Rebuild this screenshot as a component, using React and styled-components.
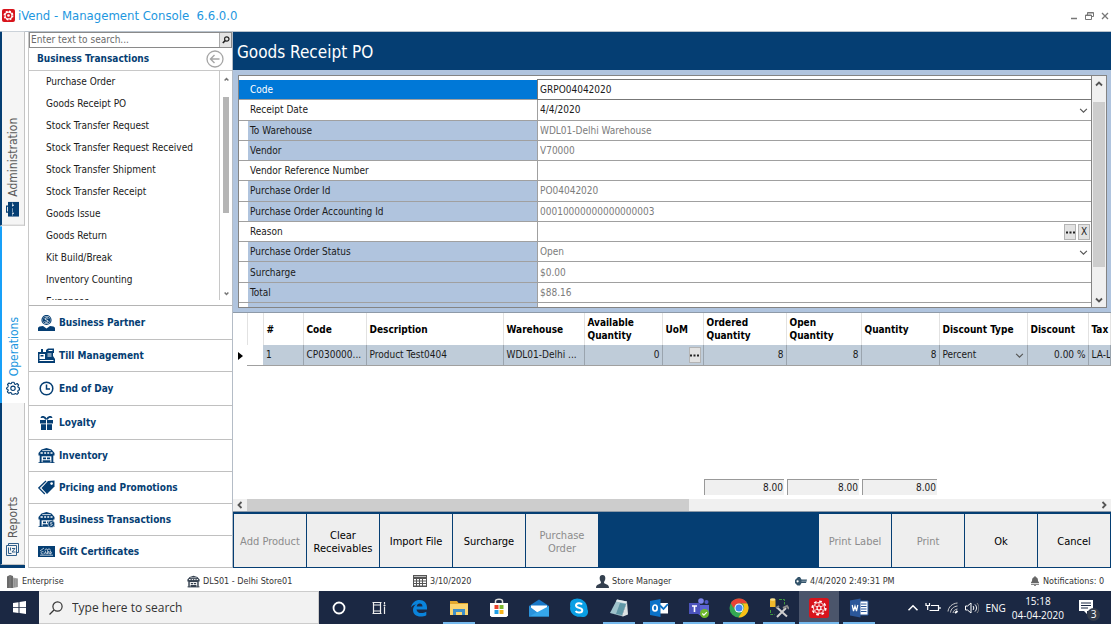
import React from 'react';
import styled, { createGlobalStyle } from 'styled-components';

const UI = "'DejaVu Sans Condensed', 'DejaVu Sans', Tahoma, sans-serif";
const SHELL = "'Open Sans', 'Noto Sans', 'Segoe UI', sans-serif";

const navy = '#053e73';
const steel = '#b0c4de';
const line = '#a0a0a0';

const menuItems = [
  'Purchase Order',
  'Goods Receipt PO',
  'Stock Transfer Request',
  'Stock Transfer Request Received',
  'Stock Transfer Shipment',
  'Stock Transfer Receipt',
  'Goods Issue',
  'Goods Return',
  'Kit Build/Break',
  'Inventory Counting',
  'Expenses',
];

const fields = [
  { id: 'code', label: 'Code', value: 'GRPO04042020', active: true },
  { id: 'date', label: 'Receipt Date', value: '4/4/2020', drop: true },
  { id: 'warehouse', label: 'To Warehouse', value: 'WDL01-Delhi Warehouse', locked: true },
  { id: 'vendor', label: 'Vendor', value: 'V70000', locked: true },
  { id: 'vendorRef', label: 'Vendor Reference Number', value: '' },
  { id: 'poId', label: 'Purchase Order Id', value: 'PO04042020', locked: true },
  { id: 'poAcc', label: 'Purchase Order Accounting Id', value: '00010000000000000003', locked: true },
  { id: 'reason', label: 'Reason', value: '', lookup: true },
  { id: 'status', label: 'Purchase Order Status', value: 'Open', locked: true, drop: true },
  { id: 'surcharge', label: 'Surcharge', value: '$0.00', locked: true },
  { id: 'total', label: 'Total', value: '$88.16', locked: true },
];

const columns = [
  { title: '', width: 14 },
  { title: '', width: 16 },
  { title: '#', width: 40 },
  { title: 'Code', width: 63 },
  { title: 'Description', width: 137 },
  { title: 'Warehouse', width: 81 },
  { title: 'Available Quantity', width: 78 },
  { title: 'UoM', width: 41 },
  { title: 'Ordered Quantity', width: 83 },
  { title: 'Open Quantity', width: 75 },
  { title: 'Quantity', width: 78 },
  { title: 'Discount Type', width: 88 },
  { title: 'Discount', width: 61 },
  { title: 'Tax', width: 0 },
];

const leftActions = [
  { text: 'Add Product', disabled: true },
  { text: 'Clear Receivables' },
  { text: 'Import File' },
  { text: 'Surcharge' },
  { text: 'Purchase Order', disabled: true },
];

const rightActions = [
  { text: 'Print Label', disabled: true },
  { text: 'Print', disabled: true },
  { text: 'Ok' },
  { text: 'Cancel' },
];

/* ---------- icons ---------- */

const Chevron = ({ dir = 'down', size = 8, color = '#555', weight = 1.4 }) => {
  const d = {
    down: 'M1 2.5 4 5.5 7 2.5',
    up: 'M1 5.5 4 2.5 7 5.5',
    left: 'M5.5 1 2.5 4 5.5 7',
    right: 'M2.5 1 5.5 4 2.5 7',
  }[dir];
  return (
    <svg width={size} height={size} viewBox="0 0 8 8">
      <path d={d} fill="none" stroke={color} strokeWidth={weight} />
    </svg>
  );
};

const LogoIcon = ({ size = 13 }) => (
  <svg width={size} height={size} viewBox="0 0 20 20">
    <rect width="20" height="20" rx="3" fill="#d8141c" />
    <circle cx="10" cy="10" r="6.6" fill="none" stroke="#fff" strokeWidth="2" strokeDasharray="3 2.18" />
    <circle cx="10" cy="10" r="5.2" fill="none" stroke="#fff" strokeWidth="1.6" />
    <circle cx="10" cy="10" r="2" fill="#fff" />
  </svg>
);

const PartnerIcon = () => (
  <svg width="17" height="16" viewBox="0 0 17 16">
    <circle cx="8.5" cy="5" r="4.5" fill="none" stroke={navy} strokeWidth="1.2" />
    <circle cx="8.5" cy="5" r="3.6" fill={navy} />
    <path d="M10.3 3.4C9.500 2.600 7 2.600 6.900 3.900c0 1.400 3.300.8 3.300 2.300 0 1.300-2.600 1.400-3.600.4" fill="none" stroke="#fff" strokeWidth="1" />
    <path d="M0 16v-3c0-1.300 2.500-1.800 5-2l3.500 2.500L12 11c2.500.2 5 .7 5 2v3z" fill={navy} />
  </svg>
);

const TillIcon = () => (
  <svg width="17" height="15" viewBox="0 0 17 15">
    <path d="M0 4h3V1h2v3h3V2l2-1.500h6V5h-1v3l2 3v4H0z" fill={navy} />
    <path d="M1.500 6H7v5H1.500z" fill="#fff" />
    <path d="M2.500 7h3v1.500h-3z" fill={navy} />
    <path d="M10.500 2.500h4M9.500 6h4M9.500 8h4M1.500 12.500h14" stroke="#fff" fill="none" />
  </svg>
);

const ClockIcon = () => (
  <svg width="15" height="15" viewBox="0 0 15 15">
    <circle cx="7.500" cy="7.500" r="6.300" fill="none" stroke={navy} strokeWidth="1.500" />
    <path d="M7.500 3.500v4.500h3.500" fill="none" stroke={navy} strokeWidth="1.500" />
  </svg>
);

const GiftIcon = () => (
  <svg width="13" height="14" viewBox="0 0 13 14">
    <path d="M0 4h6v3.500H0zM7 4h6v3.500H7zM1 8.300h5V14H1zM7 8.300h5V14H7z" fill={navy} />
    <path d="M6 3.500C5 .5 1.500 0 1.500 2M7 3.500C8 .5 11.500 0 11.500 2" fill="none" stroke={navy} strokeWidth="1.800" />
  </svg>
);

const StoreIcon = ({ size = 17, color = navy, badge }) => (
  <svg width={size} height={size} viewBox="0 0 17 17">
    <path d="M3.500 2.500 8.500 1l5 1.500 3 3.500v2.500h-1.200V16H1.700V8.500H.5V6z" fill={color} />
    <path d="M4.300 3.600h8.400" stroke="#fff" strokeWidth=".8" />
    <path d="M2.500 6h2.300M6.200 6h1.900M9.300 6h1.900M12.500 6h2" stroke="#fff" strokeWidth="1.300" />
    <path d="M3.600 9.300h9.800V16H3.600z" fill="#fff" />
    <path d="M5 10.500h3v1.700H5zM9 10.500h3v1.700H9zM4.600 13.200h7.800v1.900H4.600zM.5 15.200h16V16H.5z" fill={color} />
    {badge && (
      <>
        <circle cx="13.300" cy="13" r="3.500" fill={color} stroke="#fff" strokeWidth=".6" />
        <path d="M14.300 11.700c-1-.6-2-.2-2 .5s2 .6 2 1.400-1.200 1-2.100.4" fill="none" stroke="#fff" strokeWidth=".8" />
      </>
    )}
  </svg>
);

const TagIcon = () => (
  <svg width="17" height="15" viewBox="0 0 17 15">
    <path d="M10 1 16.500.5v6L9 14 3.500 8z" fill={navy} />
    <circle cx="13.600" cy="3.600" r="1.300" fill="#fff" />
    <path d="M8 1 .8 8l6 6" fill="none" stroke={navy} strokeWidth="1.300" />
  </svg>
);

const CardIcon = () => (
  <svg width="17" height="11" viewBox="0 0 17 11">
    <rect width="17" height="11" fill={navy} />
    <path d="M2 5 6 2M2 9.200h13M7 4.500c0-2 2.500-2 2.500 0 0-2 3-2 3 0" fill="none" stroke="#fff" strokeWidth=".7" />
    <path d="M5.500 5.800c-1.500-.5-2.500 0-2.500 1s1 1.400 2.500 1M6.500 8l1-2.500 1 2.500M9.500 8V5.500h1.200v1.200l.5 1.300M12 5.500V8c2 0 2-2.500 0-2.500" fill="none" stroke="#fff" strokeWidth=".7" />
  </svg>
);

const CaseIcon = () => (
  <svg width="13" height="15" viewBox="0 0 13 15">
    <path d="M2 0h11v15H2z" fill={navy} />
    <path d="M2.500 4.500h-2v6h2" fill="none" stroke={navy} strokeWidth="1.200" />
    <path d="M6.500 1v13" stroke="#7fa0bd" strokeDasharray="4 1.500" />
    <path d="M6 3.500h2M6 11.500h2" stroke="#fff" />
  </svg>
);

const GearIcon = () => (
  <svg width="14" height="14" viewBox="0 0 14 14" fill="none" stroke={navy} strokeWidth="1.100" strokeLinejoin="round">
    <path d="M5.900 1h2.200l.4 1.600 1.100.5 1.500-.9 1.500 1.500-.8 1.500.5 1.100 1.200.3v2l-1.300.4-.5 1.200.8 1.400-1.500 1.500-1.400-.8-1.100.5L8.100 13H5.900l-.4-1.300-1.200-.5-1.400.8-1.500-1.500.8-1.400L1.800 8 .6 7.600v-1l1.200-.8.5-1.200-.8-1.400 1.500-1.500 1.400.8 1.100-.4z" />
    <circle cx="7" cy="7" r="2.200" />
  </svg>
);

const ReportIcon = () => (
  <svg width="13" height="13" viewBox="0 0 13 13" fill="none" stroke="#2f5e8a">
    <path d="M2.500 2.500v-2h10v9h-2M.5 2.500h10v10H.5z" />
    <path d="M2.500 4.500v6M4.500 4.500v3M6 5.500h3L6 9h3.500M2.500 10.500h3" />
  </svg>
);

const PersonIcon = () => (
  <svg width="13" height="13" viewBox="0 0 13 13" fill="#34404f">
    <path d="M6.500 0C8.700 0 9.500 1.600 9.300 3.800 9.100 5.500 8.300 6.500 8 7.300c0 1 .8 1.500 2.200 2C12 9.900 13 10.500 13 13H0c0-2.500 1-3.100 2.800-3.700C4.200 8.800 5 8.300 5 7.300c-.3-.8-1.100-1.800-1.300-3.500C3.500 1.600 4.300 0 6.500 0z" />
  </svg>
);

const TowerIcon = () => (
  <svg width="12" height="13" viewBox="0 0 12 13">
    <path d="M0 1.500 3 0l3 1v12H0z" fill="#6a6a6a" />
    <path d="M6 2.500 11 3.500V12l-5 1z" fill="#a4a4a4" />
    <path d="M3 1v12M7.500 4v8M9.300 4v8" stroke="#8c8c8c" strokeWidth=".7" />
  </svg>
);

const CalendarIcon = () => (
  <svg width="14" height="12" viewBox="0 0 14 12">
    <path d="M0 0h14v12H0z" fill="#555" />
    <path d="M1 4h2v1.500H1zM4 4h2v1.500H4zM7 4h2v1.500H7zM10 4h3v1.500h-3zM1 6.500h2V8H1zM4 6.500h2V8H4zM7 6.500h2V8H7zM10 6.500h3V8h-3zM1 9h2v1.500H1zM4 9h2v1.500H4zM7 9h2v1.500H7zM10 9h3v1.500h-3z" fill="#fff" />
    <path d="M1 1.500h12" stroke="#bbb" />
  </svg>
);

const KeyIcon = () => (
  <svg width="12" height="9" viewBox="0 0 12 9">
    <path d="M3 0h2l1.500 2.500H12L11 6H6.500L5 8.500H2.500L0 6V3z" fill="#34546b" />
    <circle cx="2.600" cy="4.300" r="1.100" fill="#fff" />
    <path d="M6.500 4.200h5" stroke="#9fb3c1" strokeWidth=".8" />
  </svg>
);

const BellIcon = () => (
  <svg width="10" height="10" viewBox="0 0 10 10" fill="#666">
    <path d="M4.500 0h1v1c2 .3 2.500 1.800 2.500 4l1 1.500v.8H1v-.8L2 5c0-2.200.5-3.700 2.500-4zM1 8h8v.8H1zM4 9.200h2v.8H4z" />
  </svg>
);

/* taskbar drawings, all on a 20 unit box */
const apps = [
  {
    name: 'Edge', running: false,
    art: <path d="M2 9.500C3 4.500 6.500 2 10.500 2c4.500 0 7.500 3 7.500 7.500v2H7.500c.2 2.500 2.400 3.600 4.900 3.600 1.800 0 3.500-.5 4.900-1.300v3.400C15.600 18.200 13.700 18.600 11.700 18.600 7 18.600 4 15.800 4 12c0-2.400 1.200-4.500 3.400-5.800C5.200 6.600 3.300 7.500 2 9.500zm5.700-1h5.800c0-1.800-1-3-2.700-3s-2.800 1.200-3.100 3z" fill="#0a84dc" />,
  },
  {
    name: 'File Explorer', running: true,
    art: (<><path d="M1 3h7l1.500 2H19v12H1z" fill="#e3a92f" /><path d="M1 6h18v11H1z" fill="#fcd670" /><path d="M4 17v-6h12v6h-3v-3H7v3z" fill="#3f8fc8" /></>),
  },
  {
    name: 'Store', running: false,
    art: (<><path d="M6.500 5.500V3c0-2.500 7-2.500 7 0v2.500" fill="none" stroke="#ddd" strokeWidth="1.500" /><path d="M1 5h18v12.500L17.500 19h-15L1 17.500z" fill="#fff" /><path d="M5.500 7h4v4h-4z" fill="#e8402a" /><path d="M10.500 7h4v4h-4z" fill="#7cb82f" /><path d="M5.500 12h4v4h-4z" fill="#1e9fe8" /><path d="M10.500 12h4v4h-4z" fill="#f8b51c" /></>),
  },
  {
    name: 'Mail', running: false,
    art: (<><path d="M0 8 10 1.500 20 8v10.500H0z" fill="#1878c8" /><path d="M2 7.500h16v3l-8 5-8-5z" fill="#fff" /><path d="M0 8l9 7-9 3.500z" fill="#2a93dc" /><path d="M0 18.500 20 8v10.500z" fill="#35a6ea" /></>),
  },
  {
    name: 'Skype', running: false,
    art: (<><path d="M6 1C8-.5 18.500 1 18.500 11.500 20.500 15 17 20.500 12 18.800 4 19.500 0 13 1.300 8.500.3 4 3 1 6 1z" fill="#0a9fe4" /><path d="M13 6.500C12 4.700 7 4.700 7 7.500c0 3 6.300 1.700 6.300 4.700 0 3-5.600 3-6.600.8" fill="none" stroke="#fff" strokeWidth="2" /></>),
  },
  {
    name: 'Notepad', running: true,
    art: (<><path d="M8 1.500 18 3.500 13 18 1 15z" fill="#9fc3cc" /><path d="M8 1.500 18 3.500l-.7 2L7 3.500z" fill="#e3eaec" /><path d="M11 5l6 1-4 11-6-1z" fill="#5f97a6" /><path d="M1 15l12 3 5-14.500 1 13L14 18.500z" fill="#dde3e4" /></>),
  },
  {
    name: 'Outlook', running: true,
    art: (<><path d="M10.500 5H19v10.500h-8.500z" fill="#fff" /><path d="M11 7.500l3.500 3.500L19 6" fill="none" stroke="#0a72c8" strokeWidth="1.800" /><path d="M1 3l10.500-2v18L1 17z" fill="#0a72c8" /><ellipse cx="6" cy="10" rx="2.200" ry="3" fill="none" stroke="#fff" strokeWidth="1.700" /></>),
  },
  {
    name: 'Teams', running: true,
    art: (<><circle cx="12" cy="3" r="2.800" fill="#7b83eb" /><circle cx="17.500" cy="4" r="2" fill="#5059c9" /><path d="M8 7h12v6c0 3-2 5-5 5-4 0-7-2-7-5z" fill="#5b63d3" /><path d="M0 5h11v11H0z" fill="#4b53bc" /><path d="M3 8h5M5.500 8v6" stroke="#fff" strokeWidth="1.600" /><circle cx="15.500" cy="15.500" r="4.500" fill="#6fb92c" /><path d="M13.300 15.500l1.600 1.600 2.900-3" fill="none" stroke="#fff" strokeWidth="1.200" /></>),
  },
  {
    name: 'Chrome', running: true,
    art: (<><circle cx="10" cy="10" r="9.500" fill="#34a853" /><path d="M1.800 5.200A9.500 9.500 0 0 1 18.300 5.500H10a4.500 4.500 0 0 0-4 2.500L4.500 10z" fill="#e84335" /><path d="M18.300 5.500A9.500 9.500 0 0 1 9.500 19.500L14 12.300A4.500 4.500 0 0 0 13 5.500z" fill="#fbc116" /><circle cx="10" cy="10" r="4.500" fill="#fff" /><circle cx="10" cy="10" r="3.500" fill="#4285f4" /></>),
  },
  {
    name: 'Database Tools', running: true,
    art: (<><path d="M1 1.500h5.500V9H1z" fill="#f0b92c" /><ellipse cx="3.700" cy="1.500" rx="2.700" ry="1.200" fill="#fbe08a" /><path d="M10 1.500h5.500v5M1.500 12v4.500h4" fill="none" stroke="#3f9a3f" strokeWidth="1" strokeDasharray="3 1" /><path d="M8 9.500l10 9M17 10 8 19" stroke="#cfcfcf" strokeWidth="2" /><path d="M14 10l4-2 2 3M7 10l3-2" stroke="#8a8a8a" strokeWidth="2" fill="none" /></>),
  },
  {
    name: 'iVend', running: true, current: true,
    art: (<><rect width="20" height="20" rx="2.500" fill="#d8141c" /><circle cx="10" cy="10" r="6.800" fill="none" stroke="#fff" strokeWidth="1.600" strokeDasharray="2.700 2.640" /><circle cx="10" cy="10" r="5.500" fill="none" stroke="#fff" strokeWidth=".9" /><circle cx="10" cy="10" r="2" fill="none" stroke="#fff" strokeWidth="1.100" /><path d="M10 5v3M10 12v3M5.700 7.500l2.600 1.500M11.700 11l2.600 1.500M14.300 7.500 11.700 9M8.300 11l-2.600 1.500" stroke="#fff" strokeWidth=".8" /></>),
  },
  {
    name: 'Word', running: true,
    art: (<><path d="M10 3h9v14h-9z" fill="#fff" stroke="#2b579a" /><path d="M12 6h5.500M12 8.500h5.500M12 11h5.500M12 13.500h5.500" stroke="#2b579a" /><path d="M1 2.500l10.500-2v19L1 17.500z" fill="#2b579a" /><path d="M3.200 7l1.300 6L6 8l1.500 5 1.300-6" fill="none" stroke="#fff" strokeWidth="1.200" /></>),
  },
];

/* ---------- screen ---------- */

const sections = [
  { text: 'Business Partner', icon: <PartnerIcon />, size: 34 },
  { text: 'Till Management', icon: <TillIcon />, size: 32 },
  { text: 'End of Day', icon: <ClockIcon />, size: 34 },
  { text: 'Loyalty', icon: <GiftIcon />, size: 34 },
  { text: 'Inventory', icon: <StoreIcon />, size: 32 },
  { text: 'Pricing and Promotions', icon: <TagIcon />, size: 32 },
  { text: 'Business Transactions', icon: <StoreIcon badge />, size: 32 },
  { text: 'Gift Certificates', icon: <CardIcon />, size: 32 },
];

const TitleBar = () => (
  <TitleRow>
    <LogoIcon />
    <AppTitle>iVend - Management Console&nbsp; 6.6.0.0</AppTitle>
    <WindowButtons>
      <button aria-label="Minimize">
        <svg width="8" height="8" viewBox="0 0 8 8"><path d="M1 6.500h6" stroke="#777" strokeWidth="1.500" /></svg>
      </button>
      <button aria-label="Restore">
        <svg width="9" height="8" viewBox="0 0 9 8" fill="none" stroke="#777"><path d="M2.500 3V.5h6v4H6.500M.5 3h6v4.500h-6zM.5 3.500h6M2.500 1h6" /></svg>
      </button>
      <button aria-label="Close">
        <svg width="8" height="8" viewBox="0 0 8 8"><path d="M1 1l6 6M7 1 1 7" stroke="#777" strokeWidth="1.300" /></svg>
      </button>
    </WindowButtons>
  </TitleRow>
);

const Sidebar = () => (
  <SidebarBox>
    <SearchRow>
      <input type="text" aria-label="Search" placeholder="Enter text to search..." />
      <button aria-label="Find">
        <svg width="8" height="8" viewBox="0 0 8 8" fill="none" stroke="#222"><circle cx="4.800" cy="3" r="2.200" strokeWidth="1.200" /><path d="M3.200 4.600.8 7" strokeWidth="1.500" /></svg>
      </button>
    </SearchRow>
    <SidebarHead>
      <h2>Business Transactions</h2>
      <button aria-label="Back">
        <svg width="18" height="18" viewBox="0 0 18 18" fill="none" stroke="#a6a6a6"><circle cx="9" cy="9" r="8" strokeWidth="1.300" /><path d="M13.500 9h-9M8.500 5l-4 4 4 4" strokeWidth="1.400" /></svg>
      </button>
    </SidebarHead>
    <MenuArea>
      <Menu>
        {menuItems.map((item) => (
          <li key={item}><a href="#menu">{item}</a></li>
        ))}
      </Menu>
      <MenuScroll>
        <Chevron dir="up" size={5} color="#777" weight={2.500} />
        <MenuThumb />
        <Chevron size={5} color="#777" weight={2.500} />
      </MenuScroll>
    </MenuArea>
    <Sections>
      {sections.map((s) => (
        <SectionButton key={s.text} $size={s.size}>
          <SectionIcon>{s.icon}</SectionIcon>
          {s.text}
        </SectionButton>
      ))}
    </Sections>
  </SidebarBox>
);

const PropertyForm = () => (
  <FormFrame>
    <FormBox>
      <FormRows>
        {fields.map((f) => (
          <FieldRow key={f.id}>
            <FieldLabel htmlFor={f.id} $active={f.active} $locked={f.locked}>{f.label}</FieldLabel>
            <FieldCell $active={f.active}>
              <FieldInput id={f.id} defaultValue={f.value} readOnly={f.locked} $locked={f.locked} />
              {f.drop && <DropButton type="button" aria-label={`Open ${f.label}`}><Chevron size={9} weight={1} /></DropButton>}
              {f.lookup && (
                <>
                  <SmallButton type="button" aria-label="Browse reasons"><Dots /></SmallButton>
                  <SmallButton type="button">X</SmallButton>
                </>
              )}
            </FieldCell>
          </FieldRow>
        ))}
        <FieldRow>
          <FieldLabel as="span" $locked />
          <FieldCell />
        </FieldRow>
      </FormRows>
      <FormScroll>
        <Chevron dir="up" weight={1.800} />
        <FormThumb />
        <Chevron weight={1.800} />
      </FormScroll>
    </FormBox>
  </FormFrame>
);

const Dots = () => (
  <svg width="9" height="3" viewBox="0 0 9 3"><path d="M0 .5h2v2H0zM3.500.5h2v2h-2zM7 .5h2v2H7z" fill="#222" /></svg>
);

const LinesGrid = () => (
  <GridArea>
    <LinesTable>
      <colgroup>
        {columns.map((c, i) => <Column key={i} $w={c.width} />)}
      </colgroup>
      <thead>
        <tr>{columns.map((c, i) => <th key={i}>{c.title}</th>)}</tr>
      </thead>
      <tbody>
        <LineRow>
          <MarkCell><svg width="5" height="8" viewBox="0 0 5 8"><path d="M0 0l5 4-5 4z" fill="#000" /></svg></MarkCell>
          <BlankCell />
          <td>1</td>
          <td>CP030000...</td>
          <td>Product Test0404</td>
          <td>WDL01-Delhi ...</td>
          <NumCell>0</NumCell>
          <PickCell><SmallButton aria-label="Choose unit"><Dots /></SmallButton></PickCell>
          <NumCell>8</NumCell>
          <NumCell>8</NumCell>
          <NumCell>8</NumCell>
          <td><TypePick><span>Percent</span><Chevron size={9} weight={1} /></TypePick></td>
          <NumCell>0.00 %</NumCell>
          <td>LA-L</td>
        </LineRow>
        <tr><td colSpan={14} /></tr>
      </tbody>
      <tfoot>
        <tr>
          <td colSpan={8} />
          <td><Sum>8.00</Sum></td>
          <td><Sum>8.00</Sum></td>
          <td><Sum>8.00</Sum></td>
          <td colSpan={3} />
        </tr>
      </tfoot>
    </LinesTable>
    <GridScroll>
      <Chevron dir="left" weight={1.800} />
      <GridTrack><GridThumb /></GridTrack>
      <Chevron dir="right" weight={1.800} />
    </GridScroll>
  </GridArea>
);

const Taskbar = () => (
  <TaskRow>
    <StartButton aria-label="Start">
      <svg width="13" height="13" viewBox="0 0 13 13" fill="#fff"><path d="M0 2l5.500-.8v5H0zM6.500 1 13 0v6.200H6.500zM0 7h5.500v5L0 11.200zM6.500 7H13v6l-6.500-.9z" /></svg>
    </StartButton>
    <TaskSearch>
      <svg width="14" height="14" viewBox="0 0 14 14" fill="none" stroke="#333" strokeWidth="1.200"><circle cx="8.500" cy="5.500" r="4.600" /><path d="M5 9 .5 13.500" /></svg>
      <input type="text" aria-label="Type here to search" placeholder="Type here to search" />
    </TaskSearch>
    <TaskButton aria-label="Cortana">
      <svg width="14" height="14" viewBox="0 0 14 14"><circle cx="7" cy="7" r="5.500" fill="none" stroke="#fff" strokeWidth="1.800" /></svg>
    </TaskButton>
    <TaskButton aria-label="Task View">
      <svg width="14" height="14" viewBox="0 0 14 14" fill="none" stroke="#eee" strokeWidth="1.200"><path d="M.5 1.500h9M1.500 4h7v6h-7zM.5 12.500h9M1.500 1v3M8.500 1v3M1.500 10v3M8.500 10v3M12.500 1v2.500M12.500 5.500V13M11.500 4.500h2" /></svg>
    </TaskButton>
    {apps.map((a) => (
      <TaskButton key={a.name} aria-label={a.name} $running={a.running} $current={a.current}>
        <svg width="20" height="20" viewBox="0 0 20 20">{a.art}</svg>
      </TaskButton>
    ))}
    <Tray>
      <Chevron dir="up" size={12} color="#fff" weight={1} />
      <svg width="16" height="11" viewBox="0 0 16 11" fill="none" stroke="#fff"><path d="M6 3.500h7.500v5h-9M15 5v2M1 1v2.500h3.500V1M2.700 3.500V8" strokeWidth="1.200" /></svg>
      <svg width="12" height="12" viewBox="0 0 12 12" fill="none" stroke="#ccc"><path d="M1 9.500C1.500 5 5 1.500 10.500 1M3.500 10.500c.3-3.500 3-6 7-6.500M6 11c.2-2 2-3.700 4.500-4" /><path d="M8 11l2.500-2" stroke="#fff" strokeWidth="2" /></svg>
      <svg width="14" height="12" viewBox="0 0 14 12" fill="none" stroke="#fff"><path d="M.5 4h2L6 1v10L2.500 8h-2z" /><path d="M8 4c1 1 1 3 0 4M10 2.500c2 2 2 5 0 7" /><path d="M12 1c2.500 3 2.500 7 0 10" stroke="#888" /></svg>
      <span>ENG</span>
      <Clock><span>15:18</span><span>04-04-2020</span></Clock>
      <NoteButton aria-label="Notifications">
        <svg width="20" height="20" viewBox="0 0 20 20"><path d="M1 2h14v11H9v3l-3-3H1z" fill="#fff" /><path d="M3 5h10M3 7.500h10M3 10h7" stroke="#1b2843" /></svg>
        <NoteCount>3</NoteCount>
      </NoteButton>
    </Tray>
  </TaskRow>
);

const App = () => (
  <Window>
    <Global />
    <TitleBar />
    <Body>
      <Rail>
        <RailTab $grow={195}>Administration<CaseIcon /></RailTab>
        <RailTab $grow={178} $current>Operations<GearIcon /></RailTab>
        <RailTab $grow={160}>Reports<ReportIcon /></RailTab>
      </Rail>
      <Sidebar />
      <Main>
        <PageHead>Goods Receipt PO</PageHead>
        <PropertyForm />
        <LinesGrid />
        <Actions>
          <ActionGroup>
            {leftActions.map((a) => <ActionButton key={a.text} disabled={a.disabled}>{a.text}</ActionButton>)}
          </ActionGroup>
          <ActionGroup>
            {rightActions.map((a) => <ActionButton key={a.text} disabled={a.disabled}>{a.text}</ActionButton>)}
          </ActionGroup>
        </Actions>
      </Main>
    </Body>
    <StatusBar>
      <span><TowerIcon />Enterprise</span>
      <span><StoreIcon size={13} color="#34404f" />DLS01 - Delhi Store01</span>
      <span><CalendarIcon />3/10/2020</span>
      <span><PersonIcon />Store Manager</span>
      <span><KeyIcon />4/4/2020 2:49:31 PM</span>
      <span><BellIcon />Notifications: 0</span>
    </StatusBar>
    <Taskbar />
  </Window>
);

export default App;

const Global = createGlobalStyle`
  * {
    box-sizing: border-box;
  }

  body {
    margin: 0;
    background: #fff;
    color: #1a1a1a;
    font: 10px/12px ${UI};
  }

  button, input {
    margin: 0;
    padding: 0;
    border: 0;
    background: none;
    color: inherit;
    font: inherit;
  }

  svg {
    display: block;
    flex: none;
  }
`;

const Window = styled.div`
  display: flex;
  flex-direction: column;
  height: 100vh;
  overflow: hidden;
`;

const TitleRow = styled.header`
  display: flex;
  align-items: center;
  flex: none;
  height: 32px;
  padding: 0 2px;
  border-bottom: 1px solid #b9c3cd;
`;

const AppTitle = styled.h1`
  margin: 0 0 0 3px;
  flex: 1;
  color: #1d97e0;
  font-size: 13px;
  line-height: 16px;
  font-weight: normal;
`;

const WindowButtons = styled.div`
  display: flex;
  gap: 7px;
`;

const Body = styled.div`
  display: flex;
  flex: 1;
  min-height: 0;
`;

const Rail = styled.nav`
  display: flex;
  flex-direction: column;
  width: 25px;
  margin-right: 3px;
  border-bottom: 3px solid ${navy};
`;

const RailTab = styled.button`
  display: flex;
  flex-direction: row-reverse;
  align-items: center;
  justify-content: flex-end;
  gap: 5px;
  flex: ${(p) => p.$grow} 1 0;
  width: 25px;
  padding: 8px 4px;
  writing-mode: vertical-rl;
  transform: rotate(180deg);
  color: ${(p) => (p.$current ? '#1d97e0' : '#5a5a5a')};
  background: ${(p) => (p.$current ? '#fff' : '#f5f5f5')};
  border-right: 2px solid ${(p) => (p.$current ? '#18a0f8' : navy)};
  border-left: ${(p) => (p.$current ? '0' : '1px solid #c4c4c4')};
  border-top: ${(p) => (p.$current ? '0' : '1px solid #c4c4c4')};
  font-size: 12px;
  line-height: 14px;

  svg {
    transform: rotate(180deg);
  }
`;

const SidebarBox = styled.aside`
  display: flex;
  flex-direction: column;
  width: 205px;
  flex: none;
  border-left: 1px solid #c8c8c8;
  border-right: 1px solid #b4bcc6;
`;

const SearchRow = styled.div`
  display: flex;
  flex: none;
  height: 16px;
  border: 1px solid #8a8a8a;

  input {
    flex: 1;
    min-width: 0;
    padding-left: 1px;
  }

  input::placeholder {
    color: #6b6b6b;
    opacity: 1;
  }

  button {
    display: grid;
    place-items: center;
    width: 12px;
    background: #e4e4e4;
    border-left: 1px solid #aaa;
  }
`;

const SidebarHead = styled.div`
  display: flex;
  align-items: center;
  justify-content: space-between;
  flex: none;
  height: 23px;
  padding: 0 8px;
  border-bottom: 1px solid #c8c8c8;

  h2 {
    margin: 0;
    color: ${navy};
    font-size: 10px;
    line-height: 14px;
  }
`;

const MenuArea = styled.div`
  display: flex;
  flex: 1;
  min-height: 0;
  padding-bottom: 5px;
`;

const Menu = styled.ul`
  flex: 1;
  min-width: 0;
  margin: 0;
  padding: 0;
  overflow: hidden;
  list-style: none;
  border-right: 1px solid #c8c8c8;

  a {
    display: block;
    padding: 5px 0 5px 17px;
    color: #1a1a1a;
    text-decoration: none;
    white-space: nowrap;
  }
`;

const MenuScroll = styled.div`
  display: flex;
  flex-direction: column;
  align-items: center;
  width: 12px;
  padding: 6px 0 4px;
`;

const MenuThumb = styled.div`
  width: 6px;
  height: 116px;
  margin: 15px 0 auto;
  background: #b5b5b5;
`;

const Sections = styled.nav`
  display: flex;
  flex-direction: column;
  flex: none;
  border-top: 1px solid #b4b4b4;
`;

const SectionButton = styled.button`
  display: flex;
  align-items: center;
  height: ${(p) => p.$size}px;
  padding-left: 9px;
  border-bottom: 1px solid #c0c0c0;
  color: ${navy};
  font-weight: bold;
`;

const SectionIcon = styled.span`
  display: grid;
  place-items: center;
  width: 17px;
  margin-right: 4px;
`;

const Main = styled.main`
  display: flex;
  flex-direction: column;
  flex: 1;
  min-width: 0;
`;

const PageHead = styled.h2`
  flex: none;
  margin: 0;
  padding: 10px 4px 8px;
  background: ${navy};
  color: #fff;
  font-size: 17px;
  line-height: 20px;
  font-weight: normal;
`;

const FormFrame = styled.div`
  flex: none;
  padding: 5px 4px 4px 5px;
  background: ${steel};
`;

const FormBox = styled.form`
  display: flex;
  height: 233px;
  background: #fff;
  border: 1px solid #848484;
`;

const FormRows = styled.div`
  display: grid;
  grid-template-rows: repeat(11, 1fr) 4px;
  flex: 1;
  min-width: 0;
  padding-top: 4px;
  border-right: 1px solid #848484;
`;

const FieldRow = styled.div`
  display: flex;
  min-height: 0;
  border-bottom: 1px solid ${line};

  &:last-child {
    border-bottom: 0;
  }
`;

const FieldLabel = styled.label`
  display: flex;
  align-items: center;
  flex: 0 0 299px;
  padding-top: 1px;
  padding-left: ${(p) => (p.$locked ? 2 : 11)}px;
  border-left: ${(p) => (p.$locked ? '9px solid #fff' : '0')};
  border-right: 1px solid ${line};
  color: ${(p) => (p.$active ? '#fff' : '#1a1a1a')};
  background: ${(p) => (p.$active ? '#0078d7' : p.$locked ? steel : '#fff')};
`;

const FieldCell = styled.div`
  display: flex;
  align-items: center;
  gap: 2px;
  flex: 1;
  min-width: 0;
  padding: 1px 1px 0 2px;
  ${(p) => p.$active && 'outline: 1px solid #777;'}
`;

const FieldInput = styled.input`
  flex: 1;
  min-width: 0;
  color: ${(p) => (p.$locked ? '#7c7c7c' : '#1a1a1a')};
  outline: 0;
`;

const DropButton = styled.button`
  padding-right: 2px;
`;

const SmallButton = styled.button`
  display: grid;
  place-items: center;
  width: 12px;
  height: 16px;
  background: #e2e2e2;
  border: 1px solid #b4b4b4;
`;

const FormScroll = styled.div`
  display: flex;
  flex-direction: column;
  align-items: center;
  width: 14px;
  padding: 4px 0 3px;
  background: #f0f0f0;
`;

const FormThumb = styled.div`
  width: 12px;
  height: 165px;
  margin: 14px 0 auto;
  background: #cdcdcd;
`;

const GridArea = styled.div`
  display: flex;
  flex-direction: column;
  flex: 1;
  min-height: 0;
  overflow: hidden;
  border-top: 1px solid #8e9aa8;
`;

const LinesTable = styled.table`
  flex: 1;
  width: 100%;
  height: 100%;
  table-layout: fixed;
  border-collapse: collapse;

  td, th {
    padding: 0;
    overflow: hidden;
    white-space: nowrap;
    text-align: left;
  }

  th {
    height: 32px;
    padding-left: 3px;
    border-right: 1px solid #e2e2e2;
    font-size: 10px;
    line-height: 13px;
    white-space: normal;
    color: #000;
  }

  tfoot td {
    height: 21px;
    padding: 0 2px 4px 1px;
  }
`;

const Column = styled.col`
  width: ${(p) => (p.$w ? `${p.$w}px` : 'auto')};
`;

const LineRow = styled.tr`
  td {
    height: 20px;
    padding: 1px 3px 0 3px;
    background: #bfccd9;
    border-right: 1px solid #9aa4ae;
    border-bottom: 1px solid ${line};
  }
`;

const MarkCell = styled.td`
  && {
    padding-left: 5px;
    background: #fff;
    border-bottom: 0;
    border-right: 0;
  }
`;

const BlankCell = styled.td`
  && {
    background: #fff;
    border-right: 0;
  }
`;

const NumCell = styled.td`
  && {
    padding-right: 2px;
    text-align: right;
  }
`;

const PickCell = styled.td`
  && {
    padding-right: 2px;
  }

  ${SmallButton} {
    margin-left: auto;
  }
`;

const TypePick = styled.div`
  display: flex;
  align-items: center;
  justify-content: space-between;
`;

const Sum = styled.div`
  height: 16px;
  padding: 2px 1px;
  text-align: right;
  background: #f0f0f0;
  border-top: 1px solid #999;
  border-left: 1px solid #999;
`;

const GridScroll = styled.div`
  display: flex;
  align-items: center;
  flex: none;
  height: 13px;
  padding: 0 3px;
  background: #f0f0f0;
  border-bottom: 1px solid #8e9aa8;
`;

const GridTrack = styled.div`
  flex: 1;
  height: 12px;
  margin: 0 3px;
`;

const GridThumb = styled.div`
  width: 52%;
  height: 12px;
  background: #cdcdcd;
`;

const Actions = styled.footer`
  display: flex;
  justify-content: space-between;
  flex: none;
  padding: 2px 1px 1px;
  background: ${navy};
`;

const ActionGroup = styled.div`
  display: flex;
  gap: 1px;
`;

const ActionButton = styled.button`
  width: 72px;
  height: 53px;
  padding: 2px 4px 0;
  background: #eee;
  color: #000;
  font-size: 11px;
  line-height: 13px;

  &:disabled {
    color: #8c8c8c;
  }
`;

const StatusBar = styled.div`
  display: grid;
  grid-template-columns: 180fr 226fr 183fr 199fr 235fr 81fr;
  align-items: center;
  flex: none;
  height: 23px;
  padding: 3px 0 0 7px;
  color: #333;
  font-size: 9px;

  span {
    display: flex;
    align-items: center;
    gap: 3px;
    min-width: 0;
    white-space: nowrap;
  }
`;

const TaskRow = styled.footer`
  display: flex;
  flex: none;
  height: 33px;
  background: #1b2843;
  font-family: ${SHELL};
`;

const StartButton = styled.button`
  display: grid;
  place-items: center;
  width: 39px;
`;

const TaskSearch = styled.div`
  display: flex;
  align-items: center;
  gap: 9px;
  flex: 0 0 280px;
  padding-left: 10px;
  background: #f2f2f2;
  border: 1px solid #ccc;
  border-left: 0;

  input {
    flex: 1;
    min-width: 0;
    font-size: 12px;
    line-height: 16px;
  }

  input::placeholder {
    color: #333;
    opacity: 1;
  }
`;

const TaskButton = styled.button`
  display: grid;
  place-items: center;
  flex: 0 0 40px;
  background-color: ${(p) => (p.$current ? '#4b556b' : 'transparent')};
  background-image: ${(p) => (p.$running ? 'linear-gradient(#76b9ed, #76b9ed)' : 'none')};
  background-repeat: no-repeat;
  background-position: bottom center;
  background-size: ${(p) => (p.$current ? '100%' : '32px')} 2px;
`;

const Tray = styled.div`
  display: flex;
  align-items: center;
  gap: 6px;
  margin-left: auto;
  padding-right: 13px;
  color: #fff;
`;

const Clock = styled.div`
  display: flex;
  flex-direction: column;
  align-items: center;
  line-height: 14px;
`;

const NoteButton = styled.button`
  position: relative;
  width: 20px;
  height: 20px;
  margin-left: 8px;
`;

const NoteCount = styled.span`
  position: absolute;
  right: -2px;
  bottom: -3px;
  width: 13px;
  height: 13px;
  border-radius: 50%;
  background: #333b4a;
  color: #fff;
  font-size: 10px;
  line-height: 13px;
`;
